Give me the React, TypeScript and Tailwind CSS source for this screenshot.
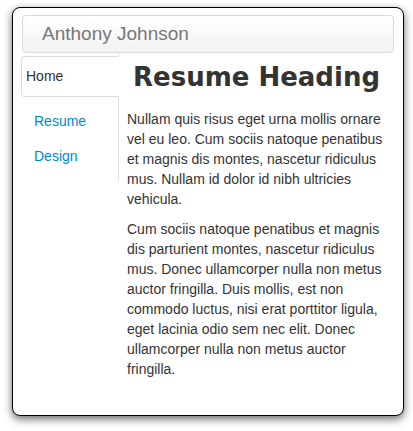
export default function App() {
  const font = { fontFamily: '"Liberation Sans", Arial, sans-serif' };

  return (
    <div className="min-h-screen bg-white" style={font}>
      {/* window frame */}
      <div className="ml-[12px] mt-[7px] w-[392px] h-[409px] border border-black rounded-[8px] bg-white shadow-[0_3px_8px_rgba(0,0,0,0.6)] pl-[8px] pr-[9px] pt-[7px]">
        {/* navbar */}
        <div className="ml-[1px] h-[38px] rounded-[4px] border border-[#dcdcdc] bg-gradient-to-b from-white to-[#f2f2f2] flex items-center pl-[19px]">
          <span className="text-[19px] text-[#777]">Anthony Johnson</span>
        </div>

        <div className="flex">
          {/* left tabs */}
          <div className="w-[98px] h-[128px] border-r border-[#ddd] shrink-0">
            <div className="mt-[3px] h-[41px] mr-[-1px] border border-r-0 border-[#ddd] rounded-l-[4px] bg-white flex items-center pl-[4px] text-[14px] text-[#333]">
              Home
            </div>
            <div className="mt-[7px] h-[35px] flex items-center pl-[13px] text-[14px] text-[#0088cc]">
              Resume
            </div>
            <div className="h-[35px] flex items-center pl-[13px] text-[14px] text-[#0088cc]">
              Design
            </div>
          </div>

          {/* content */}
          <div className="ml-[8px] flex-1 text-[#333]">
            <h1 className="mt-[8px] pl-[6px] text-[26px] leading-[32px] font-bold font-['DejaVu_Sans',sans-serif]">
              Resume Heading
            </h1>
            <p className="mt-[16px] mb-[10px] text-[14px] leading-[20px]">
              Nullam quis risus eget urna mollis ornare vel eu leo. Cum sociis natoque penatibus et magnis dis montes,
              nascetur ridiculus mus. Nullam id dolor id nibh ultricies vehicula.
            </p>
            <p className="text-[14px] leading-[20px]">
              Cum sociis natoque penatibus et magnis dis parturient montes, nascetur ridiculus mus. Donec ullamcorper
              nulla non metus auctor fringilla. Duis mollis, est non commodo luctus, nisi erat porttitor ligula, eget
              lacinia odio sem nec elit. Donec ullamcorper nulla non metus auctor fringilla.
            </p>
          </div>
        </div>
      </div>
    </div>
  );
}
